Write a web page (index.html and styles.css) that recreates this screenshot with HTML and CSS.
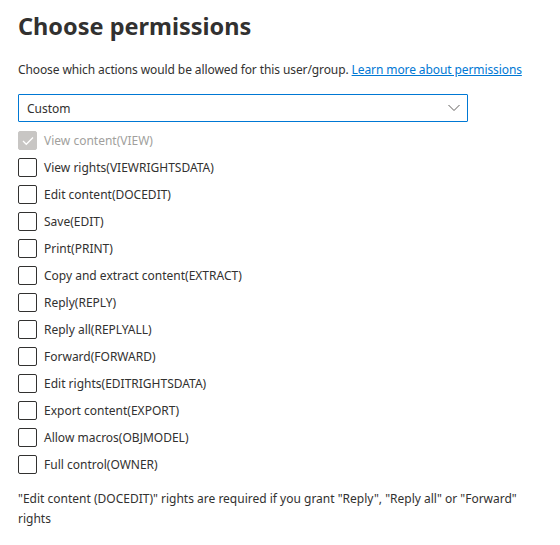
FILE: index.html
```html
<!DOCTYPE html>
<html>
<head>
<meta charset="utf-8">
<link rel="stylesheet" href="styles.css">
</head>
<body>
<div class="panel">
  <h1 class="title">Choose permissions</h1>
  <p class="desc">Choose which actions would be allowed for this user/group. <a class="link" href="#">Learn more about permissions</a></p>
  <div class="dropdown">
    <span class="dd-text">Custom</span>
    <svg class="chev" width="12" height="8" viewBox="0 0 12 8"><path d="M0.5 1 L6 6.5 L11.5 1" fill="none" stroke="#605e5c" stroke-width="1"/></svg>
  </div>
  <ul class="list">
    <li class="item disabled"><span class="box checked"><svg width="12" height="10" viewBox="0 0 12 10"><path d="M1 5 L4.3 8.3 L11 1.5" fill="none" stroke="#fff" stroke-width="1.3"/></svg></span><span class="label">View content(VIEW)</span></li>
    <li class="item"><span class="box"></span><span class="label">View rights(VIEWRIGHTSDATA)</span></li>
    <li class="item"><span class="box"></span><span class="label">Edit content(DOCEDIT)</span></li>
    <li class="item"><span class="box"></span><span class="label">Save(EDIT)</span></li>
    <li class="item"><span class="box"></span><span class="label">Print(PRINT)</span></li>
    <li class="item"><span class="box"></span><span class="label">Copy and extract content(EXTRACT)</span></li>
    <li class="item"><span class="box"></span><span class="label">Reply(REPLY)</span></li>
    <li class="item"><span class="box"></span><span class="label">Reply all(REPLYALL)</span></li>
    <li class="item"><span class="box"></span><span class="label">Forward(FORWARD)</span></li>
    <li class="item"><span class="box"></span><span class="label">Edit rights(EDITRIGHTSDATA)</span></li>
    <li class="item"><span class="box"></span><span class="label">Export content(EXPORT)</span></li>
    <li class="item"><span class="box"></span><span class="label">Allow macros(OBJMODEL)</span></li>
    <li class="item"><span class="box"></span><span class="label">Full control(OWNER)</span></li>
  </ul>
  <p class="note">"Edit content (DOCEDIT)" rights are required if you grant "Reply", "Reply all" or "Forward" rights</p>
</div>
</body>
</html>
```
FILE: styles.css
```css
html, body {
  margin: 0;
  padding: 0;
  background: #ffffff;
}
body {
  font-family: "Noto Sans", "Open Sans", sans-serif;
  color: #323130;
}
.panel {
  padding: 10px 18px 0 18px;
  width: 524px;
}
.title {
  margin: 0;
  font-size: 23.5px;
  font-weight: 700;
  line-height: 32px;
  color: #323130;
}
.desc {
  margin: 20px 0 0 0;
  font-size: 12px;
  line-height: 16px;
  white-space: nowrap;
  letter-spacing: -0.1px;
}
.link {
  color: #0078d4;
  text-decoration: underline;
}
.dropdown {
  margin-top: 16px;
  width: 450px;
  height: 28px;
  box-sizing: border-box;
  border: 1px solid #0078d4;
  border-radius: 1px;
  display: flex;
  align-items: center;
  justify-content: space-between;
  padding: 0 7px 0 8px;
}
.dd-text {
  font-size: 12px;
}
.list {
  list-style: none;
  margin: 9px 0 0 0;
  padding: 0;
  display: flex;
  flex-direction: column;
  gap: 8px;
}
.item {
  display: flex;
  align-items: center;
  height: 19px;
  gap: 7px;
}
.box {
  width: 19px;
  height: 19px;
  box-sizing: border-box;
  border: 1px solid #323130;
  border-radius: 2px;
  display: flex;
  align-items: center;
  justify-content: center;
}
.box.checked {
  background: #c8c6c4;
  border-color: #c8c6c4;
}
.label {
  font-size: 12px;
}
.disabled .label {
  color: #a19f9d;
}
.note {
  margin: 15px 0 0 0;
  width: 500px;
  font-size: 12px;
  line-height: 20px;
}
```
